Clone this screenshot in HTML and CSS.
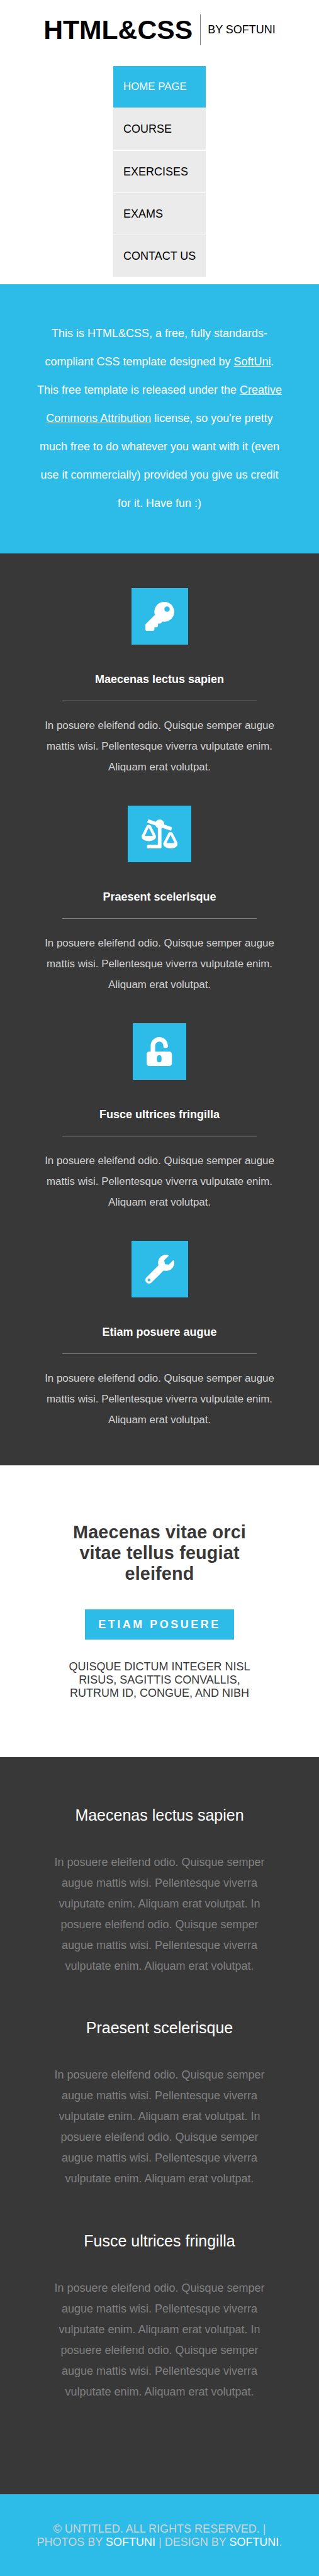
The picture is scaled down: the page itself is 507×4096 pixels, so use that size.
FILE: index.html
```html
<!DOCTYPE html>
<html lang="en">
<head>
<meta charset="utf-8">
<title>HTML&amp;CSS by SoftUni</title>
<link rel="stylesheet" href="styles.css">
</head>
<body>
<header class="header">
  <div class="brand">
    <h1 class="brand-name">HTML&amp;CSS</h1>
    <span class="brand-by">BY SOFTUNI</span>
  </div>
  <nav class="nav">
    <a class="nav-item active">HOME PAGE</a>
    <a class="nav-item">COURSE</a>
    <a class="nav-item">EXERCISES</a>
    <a class="nav-item">EXAMS</a>
    <a class="nav-item">CONTACT US</a>
  </nav>
</header>

<section class="intro">
  <p class="intro-text">This is HTML&amp;CSS, a free, fully standards-compliant CSS template designed by <a class="intro-link">SoftUni</a>. This free template is released under the <a class="intro-link">Creative Commons Attribution</a> license, so you're pretty much free to do whatever you want with it (even use it commercially) provided you give us credit for it. Have fun :)</p>
</section>

<section class="features">
  <article class="feature">
    <div class="tile"><svg class="icon" viewBox="0 0 512 512"><path d="M512 176.001C512 273.203 433.202 352 336 352c-11.22 0-22.19-1.062-32.827-3.069l-24.012 27.014A23.999 23.999 0 0 1 261.223 384H224v40c0 13.255-10.745 24-24 24h-40v40c0 13.255-10.745 24-24 24H24c-13.255 0-24-10.745-24-24v-78.059c0-6.365 2.529-12.47 7.029-16.971l161.802-161.802C163.108 213.814 160 195.271 160 176 160 78.798 238.797.001 335.999 0 433.488-.001 512 78.511 512 176.001zM336 128c0 26.51 21.49 48 48 48s48-21.49 48-48-21.49-48-48-48-48 21.49-48 48z"/></svg></div>
    <h3 class="feature-title">Maecenas lectus sapien</h3>
    <p class="feature-text">In posuere eleifend odio. Quisque semper augue mattis wisi. Pellentesque viverra vulputate enim. Aliquam erat volutpat.</p>
  </article>
  <article class="feature">
    <div class="tile tile-wide"><svg class="icon" viewBox="0 0 640 512"><path d="M96 464v32c0 8.84 7.16 16 16 16h224c8.84 0 16-7.16 16-16V153.25c4.56-2 8.92-4.35 12.99-7.12l142.05 47.63c8.38 2.81 17.45-1.71 20.26-10.08l10.17-30.34c2.81-8.38-1.71-17.45-10.08-20.26l-128.4-43.05c.42-3.32 1.01-6.6 1.01-10.03 0-44.18-35.82-80-80-80-29.69 0-55.3 16.36-69.11 40.37L132.96.83c-8.38-2.81-17.45 1.71-20.26 10.08l-10.17 30.34c-2.81 8.38 1.71 17.45 10.08 20.26l132 44.26c7.28 21.25 22.96 38.54 43.38 47.47V448H112c-8.84 0-16 7.16-16 16zM0 304c0 44.18 57.31 80 128 80s128-35.82 128-80h-.02c0-15.67 2.08-7.25-85.05-181.51-17.68-35.36-68.22-35.29-85.87 0C-1.32 295.27.02 287.82.02 304H0zm56-16l72-144 72 144H56zm328.02 144H384c0 44.18 57.31 80 128 80s128-35.82 128-80h-.02c0-15.67 2.08-7.25-85.05-181.51-17.68-35.36-68.22-35.29-85.87 0-86.38 172.78-85.04 165.33-85.04 181.51zM440 416l72-144 72 144H440z"/></svg></div>
    <h3 class="feature-title">Praesent scelerisque</h3>
    <p class="feature-text">In posuere eleifend odio. Quisque semper augue mattis wisi. Pellentesque viverra vulputate enim. Aliquam erat volutpat.</p>
  </article>
  <article class="feature">
    <div class="tile tile-narrow"><svg class="icon" viewBox="0 0 448 512"><path d="M400 256H152V152.9c0-39.6 31.7-72.5 71.3-72.9 40-.4 72.7 32.1 72.7 72v16c0 13.3 10.7 24 24 24h32c13.3 0 24-10.7 24-24v-16C376 68 307.5-.3 223.5 0 139.5.3 72 69.5 72 153.5V256H48c-26.5 0-48 21.5-48 48v160c0 26.5 21.5 48 48 48h352c26.5 0 48-21.5 48-48V304c0-26.5-21.5-48-48-48zM264 408c0 22.1-17.9 40-40 40s-40-17.9-40-40v-48c0-22.1 17.9-40 40-40s40 17.9 40 40v48z"/></svg></div>
    <h3 class="feature-title">Fusce ultrices fringilla</h3>
    <p class="feature-text">In posuere eleifend odio. Quisque semper augue mattis wisi. Pellentesque viverra vulputate enim. Aliquam erat volutpat.</p>
  </article>
  <article class="feature">
    <div class="tile"><svg class="icon" viewBox="0 0 512 512"><path d="M507.73 109.1c-2.24-9.03-13.54-12.09-20.12-5.51l-74.36 74.36-67.88-11.31-11.31-67.88 74.36-74.36c6.62-6.62 3.43-17.9-5.66-20.16-47.38-11.74-99.55.91-136.58 37.93-39.64 39.64-50.55 97.1-34.05 147.2L18.74 402.76c-24.99 24.99-24.99 65.51 0 90.5 24.99 24.99 65.51 24.99 90.5 0l213.21-213.21c50.12 16.71 107.47 5.68 147.37-34.22 37.07-37.07 49.7-89.32 37.91-136.73zM64 472c-13.25 0-24-10.75-24-24 0-13.26 10.75-24 24-24s24 10.74 24 24c0 13.25-10.75 24-24 24z"/></svg></div>
    <h3 class="feature-title">Etiam posuere augue</h3>
    <p class="feature-text">In posuere eleifend odio. Quisque semper augue mattis wisi. Pellentesque viverra vulputate enim. Aliquam erat volutpat.</p>
  </article>
</section>

<section class="cta">
  <h2 class="cta-title">Maecenas vitae orci vitae tellus feugiat eleifend</h2>
  <a class="button">ETIAM POSUERE</a>
  <p class="cta-text">QUISQUE DICTUM INTEGER NISL RISUS, SAGITTIS CONVALLIS, RUTRUM ID, CONGUE, AND NIBH</p>
</section>

<section class="posts">
  <article class="post">
    <h3 class="post-title">Maecenas lectus sapien</h3>
    <p class="post-text">In posuere eleifend odio. Quisque semper augue mattis wisi. Pellentesque viverra vulputate enim. Aliquam erat volutpat. In posuere eleifend odio. Quisque semper augue mattis wisi. Pellentesque viverra vulputate enim. Aliquam erat volutpat.</p>
  </article>
  <article class="post">
    <h3 class="post-title">Praesent scelerisque</h3>
    <p class="post-text">In posuere eleifend odio. Quisque semper augue mattis wisi. Pellentesque viverra vulputate enim. Aliquam erat volutpat. In posuere eleifend odio. Quisque semper augue mattis wisi. Pellentesque viverra vulputate enim. Aliquam erat volutpat.</p>
  </article>
  <article class="post">
    <h3 class="post-title">Fusce ultrices fringilla</h3>
    <p class="post-text">In posuere eleifend odio. Quisque semper augue mattis wisi. Pellentesque viverra vulputate enim. Aliquam erat volutpat. In posuere eleifend odio. Quisque semper augue mattis wisi. Pellentesque viverra vulputate enim. Aliquam erat volutpat.</p>
  </article>
</section>

<footer class="footer">
  <p class="footer-text">© UNTITLED. ALL RIGHTS RESERVED. | PHOTOS BY <a class="footer-link">SOFTUNI</a> | DESIGN BY <a class="footer-link">SOFTUNI</a>.</p>
</footer>
</body>
</html>
```
FILE: styles.css
```css
* {
  box-sizing: border-box;
  margin: 0;
  padding: 0;
}

body {
  background: #fff;
  color: #000;
  font-family: "Liberation Sans", Arial, sans-serif;
  font-size: 18px;
  line-height: 21px;
  text-align: center;
}

/* Header */
.header {
  height: 452px;
  padding-top: 23px;
}

.brand {
  display: flex;
  justify-content: center;
  align-items: center;
  height: 49px;
}

.brand-name {
  padding-right: 12px;
  border-right: 1px solid #808080;
  font-size: 42.67px;
  line-height: 49px;
}

.brand-by {
  padding: 0 0 1px 11px;
}

.nav {
  display: flex;
  flex-direction: column;
  gap: 1.25px;
  width: 147px;
  margin: 33px auto 0;
  text-align: left;
}

.nav-item {
  height: 66px;
  padding-left: 16px;
  background: #ebebeb;
  line-height: 66px;
}

.nav-item.active {
  background: #2dbbe8;
  color: #fff;
  font-size: 16.875px;
}

/* Intro */
.intro {
  height: 428px;
  padding-top: 56px;
  background: #2dbbe8;
  color: #fff;
}

.intro-text {
  width: 397px;
  margin: 0 auto;
  line-height: 45px;
}

.intro-link {
  text-decoration: underline;
}

/* Features */
.features {
  display: flex;
  flex-direction: column;
  gap: 45px;
  padding: 55px 0 56px;
  background: #383838;
}

.feature {
  display: flex;
  flex-direction: column;
  align-items: center;
}

.tile {
  display: flex;
  align-items: center;
  justify-content: center;
  width: 90px;
  height: 90px;
  background: #2dbbe8;
}

.tile-wide {
  width: 101px;
}

.tile-narrow {
  width: 85px;
}

.icon {
  height: 46px;
  fill: #fff;
}

.feature-title {
  width: 309px;
  margin-top: 45px;
  padding-bottom: 23px;
  border-bottom: 1px solid #808080;
  color: #fff;
  font-size: 18px;
}

.feature-text {
  width: 380px;
  margin-top: 22px;
  color: #d3d3d3;
  font-size: 16.875px;
  line-height: 33px;
}

/* Call to action */
.cta {
  display: flex;
  flex-direction: column;
  align-items: center;
  padding: 90px 0 91px;
  color: #383838;
}

.cta-title {
  width: 300px;
  font-size: 28.8px;
  letter-spacing: 0.15px;
  line-height: 33px;
}

.button {
  width: 237px;
  height: 48px;
  margin-top: 40px;
  background: #2dbbe8;
  color: #fff;
  font-weight: bold;
  letter-spacing: 3.5px;
  line-height: 48px;
}

.cta-text {
  width: 300px;
  margin-top: 33px;
}

/* Posts */
.posts {
  display: flex;
  flex-direction: column;
  gap: 67.3px;
  height: 1172px;
  padding-top: 78px;
  background: #383838;
}

.post-title {
  color: #fff;
  font-size: 25px;
  font-weight: normal;
  line-height: 29px;
}

.post-text {
  width: 346px;
  margin: 44px auto 0;
  color: #808080;
  line-height: 33px;
}

/* Footer */
.footer {
  height: 130px;
  padding-top: 45px;
  background: #2dbbe8;
  color: #d3d3d3;
}

.footer-text {
  width: 397px;
  margin: 0 auto;
}

.footer-link {
  color: #fff;
}
```
